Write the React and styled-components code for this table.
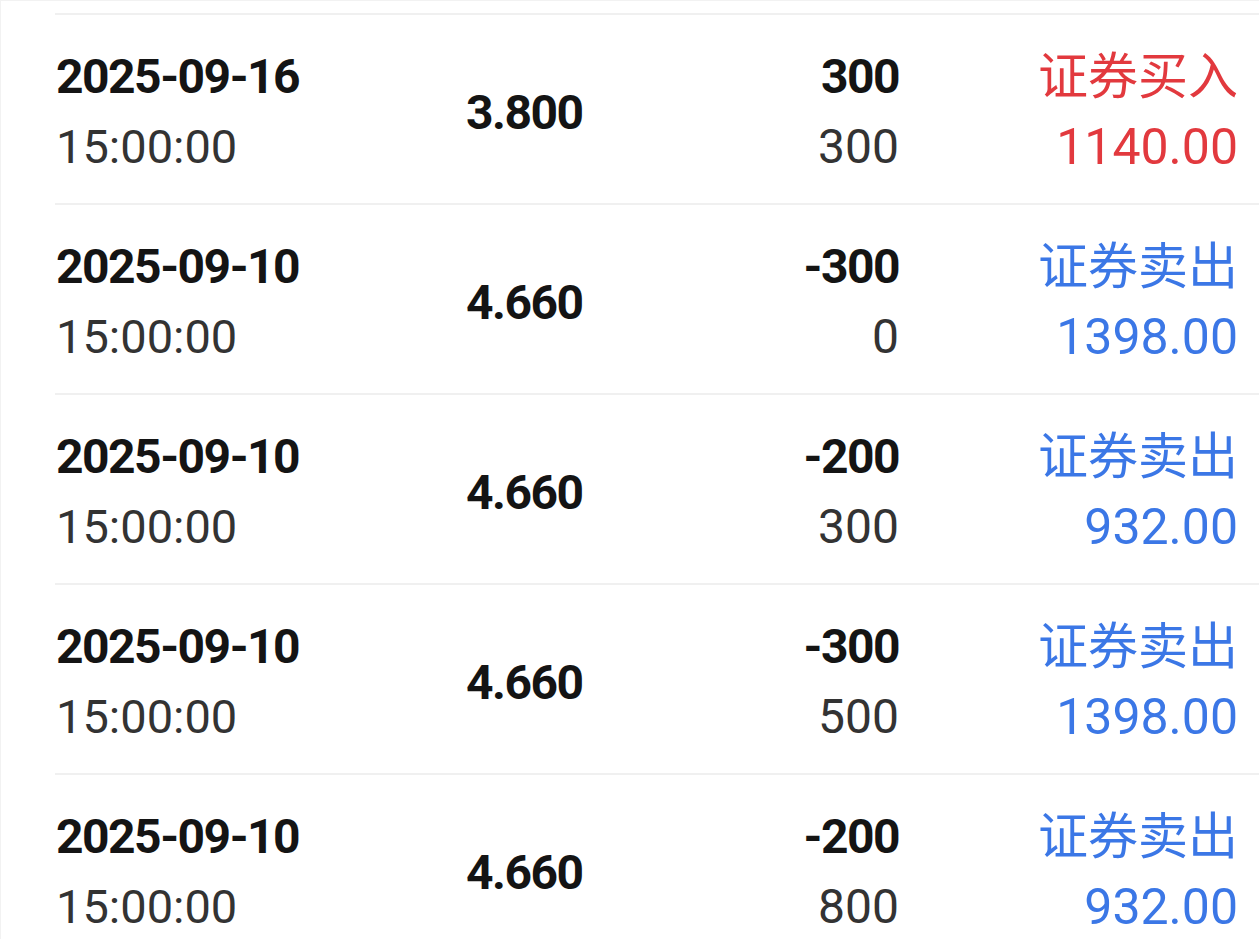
import styled, { createGlobalStyle } from 'styled-components';

const GlobalStyle = createGlobalStyle`
  html, body {
    margin: 0;
    padding: 0;
    background: #fff;
    overflow: hidden;
  }
`;

const Page = styled.div`
  width: 1259px;
  height: 939px;
  box-sizing: border-box;
  border-top: 1px solid #f2f2f2;
  border-left: 1px solid #f2f2f2;
  padding: 12px 0 0 54px;
  overflow: hidden;
  font-family: Roboto, 'Noto Sans CJK SC', sans-serif;
`;

const Row = styled.div`
  display: grid;
  grid-template-columns: 410px 200px 233px 1fr;
  align-items: center;
  height: 190px;
  box-sizing: border-box;
  padding: 6px 21px 0 1px;
  border-top: 2px solid #f0f0f0;
`;

const Stack = styled.div`
  display: flex;
  flex-direction: column;
  align-items: ${p => (p.$right ? 'flex-end' : 'flex-start')};
`;

const Line = styled.div`
  height: 70px;
  line-height: 70px;
  white-space: nowrap;
  font-size: ${p => p.$size || 48}px;
  font-weight: ${p => (p.$bold ? 700 : 400)};
  letter-spacing: ${p => (p.$bold ? '-1.5px' : '0')};
  color: ${p => p.$color || (p.$bold ? '#141414' : '#333')};
`;

const Price = styled.div`
  font-size: 48px;
  font-weight: 700;
  letter-spacing: -1.5px;
  color: #141414;
`;

const RED = '#e2393e';
const BLUE = '#3b77e6';

const rows = [
  { date: '2025-09-16', price: '3.800', qty: '300', left: '300', type: '证券买入', amount: '1140.00', buy: true },
  { date: '2025-09-10', price: '4.660', qty: '-300', left: '0', type: '证券卖出', amount: '1398.00' },
  { date: '2025-09-10', price: '4.660', qty: '-200', left: '300', type: '证券卖出', amount: '932.00' },
  { date: '2025-09-10', price: '4.660', qty: '-300', left: '500', type: '证券卖出', amount: '1398.00' },
  { date: '2025-09-10', price: '4.660', qty: '-200', left: '800', type: '证券卖出', amount: '932.00' },
];

export default function App() {
  return (
    <>
      <GlobalStyle />
      <Page>
        {rows.map((r, i) => {
          const c = r.buy ? RED : BLUE;
          return (
            <Row key={i}>
              <Stack>
                <Line $bold>{r.date}</Line>
                <Line $size={47}>15:00:00</Line>
              </Stack>
              <Price>{r.price}</Price>
              <Stack $right>
                <Line $bold>{r.qty}</Line>
                <Line $size={48}>{r.left}</Line>
              </Stack>
              <Stack $right>
                <Line $size={50} $color={c}>{r.type}</Line>
                <Line $size={50} $color={c}>{r.amount}</Line>
              </Stack>
            </Row>
          );
        })}
      </Page>
    </>
  );
}
